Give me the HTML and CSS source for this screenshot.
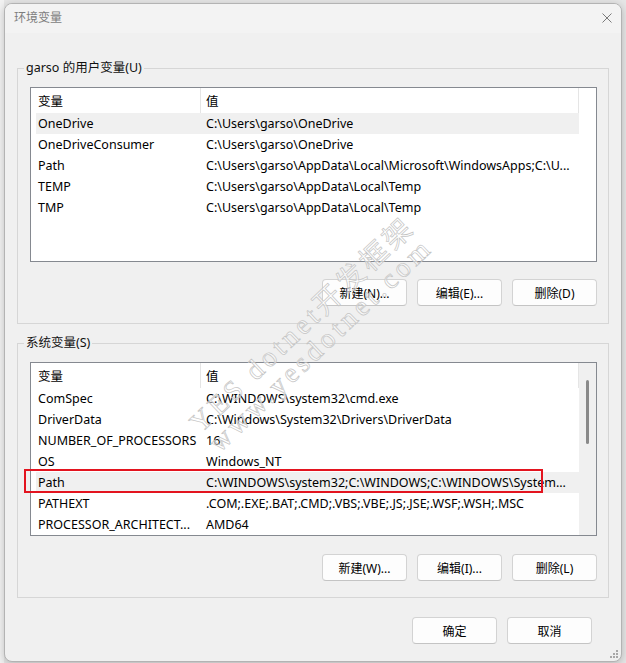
FILE: index.html
```html
<!DOCTYPE html>
<html lang="zh-CN">
<head>
<meta charset="utf-8">
<title>环境变量</title>
<link rel="stylesheet" href="styles.css">
</head>
<body>
<div class="desk">
  <div class="dialog">
    <div class="titlebar">
      <span class="title">环境变量</span>
      <svg class="close" width="10" height="10" viewBox="0 0 10 10"><path d="M0.5 0.5L9.5 9.5M9.5 0.5L0.5 9.5" stroke="#7a7a7a" stroke-width="1" fill="none"/></svg>
    </div>
    <div class="content">
      <fieldset class="group">
        <legend>garso 的用户变量(U)</legend>
        <div class="list list-user">
          <div class="table">
            <div class="head"><div class="hc">变量</div><div class="hc">值</div></div>
            <div class="row hl"><span>OneDrive</span><span>C:\Users\garso\OneDrive</span></div>
            <div class="row"><span>OneDriveConsumer</span><span>C:\Users\garso\OneDrive</span></div>
            <div class="row"><span>Path</span><span>C:\Users\garso\AppData\Local\Microsoft\WindowsApps;C:\U...</span></div>
            <div class="row"><span>TEMP</span><span>C:\Users\garso\AppData\Local\Temp</span></div>
            <div class="row"><span>TMP</span><span>C:\Users\garso\AppData\Local\Temp</span></div>
          </div>
        </div>
        <div class="btns">
          <button class="btn">新建(N)...</button>
          <button class="btn">编辑(E)...</button>
          <button class="btn">删除(D)</button>
        </div>
      </fieldset>

      <fieldset class="group group-sys">
        <legend>系统变量(S)</legend>
        <div class="list list-sys">
          <div class="table">
            <div class="head"><div class="hc">变量</div><div class="hc">值</div></div>
            <div class="row"><span>ComSpec</span><span>C:\WINDOWS\system32\cmd.exe</span></div>
            <div class="row"><span>DriverData</span><span>C:\Windows\System32\Drivers\DriverData</span></div>
            <div class="row"><span>NUMBER_OF_PROCESSORS</span><span>16</span></div>
            <div class="row"><span>OS</span><span>Windows_NT</span></div>
            <div class="row hl"><span>Path</span><span>C:\WINDOWS\system32;C:\WINDOWS;C:\WINDOWS\System...</span></div>
            <div class="row"><span>PATHEXT</span><span>.COM;.EXE;.BAT;.CMD;.VBS;.VBE;.JS;.JSE;.WSF;.WSH;.MSC</span></div>
            <div class="row"><span>PROCESSOR_ARCHITECT...</span><span>AMD64</span></div>
          </div>
          <div class="sb"><div class="thumb"></div></div>
          <div class="redbox"></div>
        </div>
        <div class="btns btns-sys">
          <button class="btn">新建(W)...</button>
          <button class="btn">编辑(I)...</button>
          <button class="btn">删除(L)</button>
        </div>
      </fieldset>

      <div class="footer">
        <button class="btn">确定</button>
        <button class="btn">取消</button>
      </div>
    </div>

    <div class="watermark">
      <div class="wm-line">YES dotnet开发框架</div>
      <div class="wm-line">www.yesdotnet.com</div>
    </div>

    <svg class="grip" width="8" height="8" viewBox="0 0 8 8">
      <rect x="6" y="0" width="2" height="2" fill="#a8a8a8"/>
      <rect x="3" y="3" width="2" height="2" fill="#a8a8a8"/>
      <rect x="6" y="3" width="2" height="2" fill="#a8a8a8"/>
      <rect x="0" y="6" width="2" height="2" fill="#a8a8a8"/>
      <rect x="3" y="6" width="2" height="2" fill="#a8a8a8"/>
      <rect x="6" y="6" width="2" height="2" fill="#a8a8a8"/>
    </svg>
  </div>
</div>
</body>
</html>
```

FILE: styles.css
```css
* { box-sizing: border-box; }

html, body {
  margin: 0;
  padding: 0;
}

body {
  width: 626px;
  height: 663px;
  overflow: hidden;
  background-color: #e6e6e6;
  background-image: linear-gradient(to right, #f2f2f2 0, #f2f2f2 4px, transparent 4px);
  font-family: "Noto Sans", "Noto Sans CJK SC", sans-serif;
  font-size: 12.5px;
  color: #000;
}

.desk {
  padding: 3px 0 0 4px;
}

.dialog {
  position: relative;
  width: 618px;
  height: 659px;
  border: 1px solid #b3b3b3;
  border-radius: 8px;
  background: #f0f0f0;
  box-shadow: 0 2px 8px rgba(0, 0, 0, 0.22);
  overflow: hidden;
  display: flex;
  flex-direction: column;
}

.titlebar {
  height: 29px;
  flex: none;
  display: flex;
  justify-content: space-between;
  align-items: flex-start;
  padding: 6px 9px 0 9px;
  background: #f3f3f3;
}

.title {
  font-size: 12px;
  line-height: 16px;
  color: #7d7d7d;
}

.close {
  margin-top: 3px;
}

.content {
  padding: 0 12px;
  display: flex;
  flex-direction: column;
}

.group {
  margin: 27px 0 0 0;
  min-width: 0;
  border: 1px solid #d6d6d6;
  padding: 11px 11px 17px 5px;
}

.group-sys {
  margin-top: 11px;
  padding-bottom: 16px;
}

.group legend {
  margin-left: 1px;
  padding: 0 2px;
  line-height: 16px;
  color: #111;
}

.list {
  position: relative;
  margin-left: 7px;
  height: 175px;
  border: 1px solid #858990;
  background: #fff;
  display: flex;
}

.list-sys {
  height: 174px;
}

.table {
  width: 548px;
  flex: none;
}

.head {
  display: grid;
  grid-template-columns: 170px 378px;
  height: 25px;
}

.hc {
  display: flex;
  align-items: center;
  border-right: 1px solid #e5e5e5;
  white-space: nowrap;
}

.hc:first-child { padding-left: 7px; }
.hc:last-child { padding-left: 5px; }

.row {
  display: grid;
  grid-template-columns: 168px 1fr;
  align-items: center;
  height: 21px;
  width: 543px;
  margin-left: 5px;
  padding-left: 2px;
  white-space: nowrap;
  overflow: hidden;
}

.row.hl {
  background: #f0f0f0;
}

.sb {
  width: 17px;
  flex: none;
  background: #f0f0f0;
  padding-top: 17px;
}

.thumb {
  margin-left: 7px;
  width: 3px;
  height: 64px;
  border-radius: 2px;
  background: #8a8a8a;
}

.redbox {
  position: absolute;
  left: -7px;
  top: 106px;
  width: 519px;
  height: 24px;
  border: 2px solid #e3141f;
}

.btns {
  display: flex;
  justify-content: flex-end;
  gap: 10px;
  margin-top: 17px;
  margin-left: 7px;
}

.btns-sys {
  margin-top: 18px;
}

.btn {
  width: 85px;
  height: 27px;
  padding: 0;
  border: 1px solid #d3d3d3;
  border-bottom-color: #c4c4c4;
  border-radius: 4px;
  background: #fdfdfd;
  font-family: inherit;
  font-size: 12px;
  color: #000;
}

.footer {
  display: flex;
  justify-content: flex-end;
  gap: 10px;
  margin-top: 19px;
  padding-right: 17px;
}

.watermark {
  position: absolute;
  left: 180px;
  top: 413px;
  transform-origin: 0 0;
  transform: rotate(-43.5deg);
  pointer-events: none;
}

.wm-line {
  font-family: "Liberation Serif", "Noto Sans CJK SC", serif;
  font-size: 28px;
  line-height: 27px;
  letter-spacing: 4px;
  white-space: nowrap;
  color: rgba(255, 255, 255, 0.55);
  -webkit-text-stroke: 0.7px #c4c4c4;
}

.grip {
  position: absolute;
  right: 3px;
  bottom: 3px;
}
```
